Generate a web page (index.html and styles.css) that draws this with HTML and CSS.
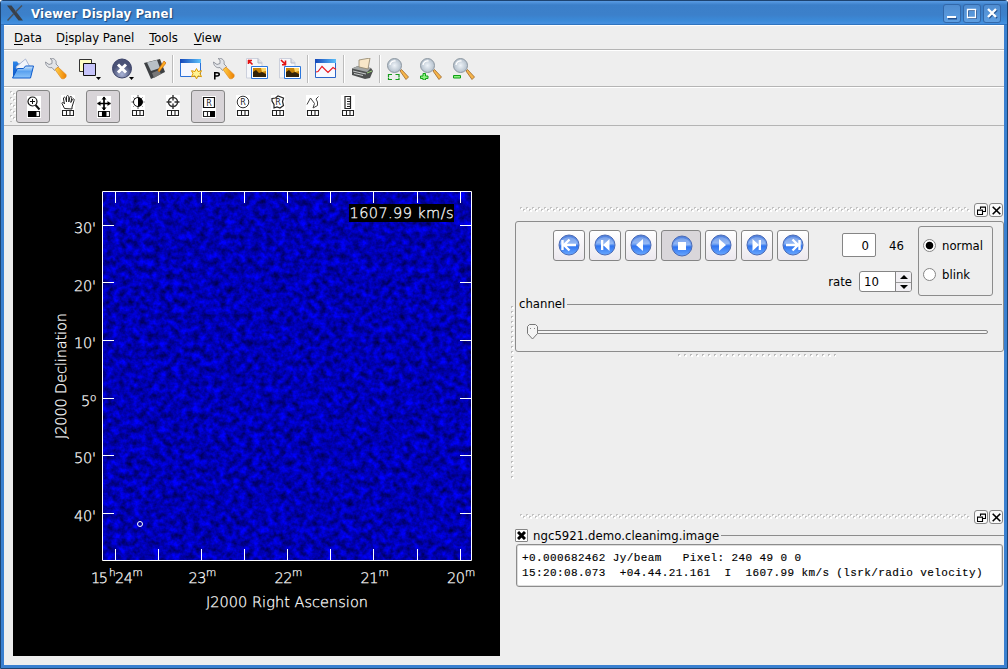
FILE: index.html
```html
<!DOCTYPE html>
<html lang="en">
<head>
<meta charset="utf-8">
<title>Viewer Display Panel</title>
<link rel="stylesheet" href="styles.css">
</head>
<body>
<svg class="defs" width="0" height="0">
  <defs>
    <pattern id="dots" width="6" height="6" patternUnits="userSpaceOnUse"><path d="M1 1h2v2H1zM4 3h2v2H4z" fill="#fff"/><path d="M0 0h2v1H1v1H0zM3 2h2v1H4v1H3z" fill="#c2c2c2"/></pattern>
    <pattern id="dotsH" width="6" height="5" patternUnits="userSpaceOnUse"><path d="M1 1h2v2H1z" fill="#fff"/><path d="M0 0h2v1H1v1H0z" fill="#bbb"/></pattern>
    <pattern id="dotsV" width="5" height="5" patternUnits="userSpaceOnUse"><path d="M1 1h2v2H1z" fill="#fff"/><path d="M0 0h2v1H1v1H0z" fill="#bbb"/></pattern>
    <linearGradient id="ball" x2="0" y2="1"><stop stop-color="#4a7cdc"/><stop offset=".45" stop-color="#79a8f4"/><stop offset=".55" stop-color="#2f74f0"/><stop offset="1" stop-color="#6aa8ff"/></linearGradient>
    <linearGradient id="folder" x2="0" y2="1"><stop stop-color="#2f86e8"/><stop offset="1" stop-color="#0b52c4"/></linearGradient>
    <linearGradient id="flap" x2="0" y2="1"><stop stop-color="#d6eafc"/><stop offset=".45" stop-color="#5aa2f0"/><stop offset="1" stop-color="#8cc4fa"/></linearGradient>
    <linearGradient id="winbar" x2="1" y2="0"><stop stop-color="#1446b8"/><stop offset="1" stop-color="#5cc0fa"/></linearGradient>
    <linearGradient id="orange" x2="1" y2="0"><stop stop-color="#ffd24a"/><stop offset="1" stop-color="#ee7f00"/></linearGradient>
    <radialGradient id="glass"><stop stop-color="#eef3f8"/><stop offset="1" stop-color="#b4c0cc"/></radialGradient>
    <radialGradient id="stopball" cy=".8"><stop stop-color="#aab4d8"/><stop offset="1" stop-color="#4a5276"/></radialGradient>
    <symbol id="wrench" viewBox="0 0 22 22"><path d="M.5 4 4 6.500 7 5.500V2L5 .5C9-.5 12 2.500 11 6l2.500 2.500-4 4L7 9.500C4 10.500.5 8 .5 4z" fill="#e2e4e8" stroke="#92969e"/><path d="M10 11.500l3-2.500 8 7.500c1 3-2 5-4.500 4z" fill="url(#orange)" stroke="#e08a20" stroke-width=".7"/></symbol>
    <symbol id="lens" viewBox="0 0 22 22"><path d="M13 13l1.500-1.500 7 7.500-2.500 2.500z" fill="#f7b54a" stroke="#9a6428" stroke-width=".8"/><circle cx="7.500" cy="7.500" r="7" fill="url(#glass)" stroke="#8e98a2"/><path d="M3 7c0-3 3-4.500 5.500-4" fill="none" stroke="#fff" stroke-width="1.300"/></symbol>
    <symbol id="page" viewBox="0 0 22 22"><path d="M.5.500H12l4 4V20H.5z" fill="#f6f7fa" stroke="#ccd0dc"/><path d="M12 .5V5h4" fill="#dfe2ea" stroke="#b4b8c4"/><path d="M5.500 8.500h16v12h-16z" fill="#fff" stroke="#2b76dc"/><path d="M7 10h13v9H7z" fill="#c88408"/><path d="M15 10h5v3l-4 1z" fill="#ffd768"/><path d="M7 14l3-2 3 3 3-1 4 2v3H7z" fill="#33240a"/></symbol>
    <symbol id="keys" viewBox="0 0 14 7"><path d="M1.500.5h11v5h-11zM5.500 1v5M9 1v5" fill="#fff" stroke="#222" stroke-width="1.100"/></symbol>
    <symbol id="ballbg" viewBox="0 0 22 22"><circle cx="11" cy="11" r="10" fill="url(#ball)" stroke="#4b6bb6"/><path d="M2.500 9.500C4 1 18 1 19.500 9.500 14 12 8 8.500 2.500 9.500z" fill="#fff" opacity=".22"/></symbol>
    <symbol id="float" viewBox="0 0 9 9"><path d="M3.500 3V1h5v4.500H6M3 1.200h6" fill="none" stroke="#000" stroke-width="1.100"/><path d="M.5 4h5v4.500h-5zM0 4.200h6" fill="none" stroke="#000" stroke-width="1.100"/></symbol>
    <symbol id="close" viewBox="0 0 9 9"><path d="M.7.7l7.600 7.600M8.300.7L.7 8.300" stroke="#000" stroke-width="1.600"/></symbol>
    <filter id="noise" x="0" y="0" width="1" height="1" color-interpolation-filters="sRGB"><feTurbulence type="fractalNoise" baseFrequency=".15" numOctaves="3" seed="7"/><feColorMatrix values="0 0 0 0 0  0 0 0 0 0  1 0 0 0 .2  0 0 0 0 1"/></filter>
  </defs>
</svg>
<div class="window">
  <header class="titlebar">
    <svg class="xlogo" width="16" height="16"><path d="M0 .5h4.500L16 15.500h-4.500z" fill="#394049"/><path d="M15 .5 8.500 7M6.500 9 .5 15.500" stroke="#4a525c" stroke-width="1.500"/></svg>
    <h1 class="title">Viewer Display Panel</h1>
    <div class="winbtns">
      <span class="winbtn"><svg width="18" height="18"><path d="M5 14.500h9" stroke="#245290" stroke-width="2"/><path d="M4 13h9" stroke="#fff" stroke-width="2"/></svg></span>
      <span class="winbtn"><svg width="18" height="18"><path d="M5.500 6.500h8v8h-8z" fill="none" stroke="#245290"/><path d="M4.500 5.500h8v8h-8zM4 5.500h9" fill="none" stroke="#fff" stroke-width="1.300"/></svg></span>
      <span class="winbtn"><svg width="18" height="18"><path d="M6 6l8 8M14 6l-8 8" stroke="#245290" stroke-width="2"/><path d="M5 5l8 8M13 5l-8 8" stroke="#fff" stroke-width="2.400"/></svg></span>
    </div>
  </header>
  <nav class="menubar"><span class="menu"><u>D</u>ata</span><span class="menu wide">D<u>i</u>splay Panel</span><span class="menu"><u>T</u>ools</span><span class="menu view"><u>V</u>iew</span></nav>
  <div class="toolbar">
    <span class="tool"><svg width="22" height="22"><path d="M1 3.500h4l1.500 2H11v14H1z" fill="url(#folder)"/><path d="M4 9l9.500-8 5 9-9 8z" fill="#f2f5fc" stroke="#aab6d2"/><path d="M.5 20 5.500 10.500h6l2-2.500h8l-3 12z" fill="url(#flap)" stroke="#0d5bcc"/></svg></span>
    <span class="tool"><svg width="22" height="22"><use href="#wrench"/></svg></span>
    <span class="tool shift"><svg width="22" height="22"><path d="M.5 1.500h12v12H.5z" fill="#ffffc4" stroke="#333"/><path d="M4.500 5.500h12v12h-12z" fill="#c6c4fa" stroke="#111"/><path d="M17 19h5l-2.500 3z"/></svg></span>
    <span class="tool shift"><svg width="22" height="22"><circle cx="10" cy="10.500" r="9.500" fill="url(#stopball)" stroke="#3b4268"/><path d="M6 6.500l8 8M14 6.500l-8 8" stroke="#fff" stroke-width="3"/><path d="M17 19h5l-2.500 3z"/></svg></span>
    <span class="tool"><svg width="22" height="22"><path d="M0 5 16 1l5 13-14 7z" fill="#3d4043"/><path d="M3 4.500 13 2l3 8-9 3z" fill="#b8c0c6"/><path d="M8 15l7-3 2 4-7 4z" fill="#777"/><path d="M20 3l2 2-7 9-1-2z" fill="#ffad22" stroke="#c96908" stroke-width=".7"/></svg></span>
    <span class="sep"></span>
    <span class="tool"><svg width="22" height="22"><path d="M.5 1.500h20v17H.5z" fill="#f5f7ff" stroke="#2a70d8"/><path d="M0 1h21v4H0z" fill="url(#winbar)"/><path d="M16.500 10.500l1.500 3 3.500-.8-1.500 3 1.500 3-3.500-.8-1.500 3-1.500-3-3.500.8 1.500-3-1.500-3 3.500.8z" fill="#fff394" stroke="#e09a00"/></svg></span>
    <span class="tool"><svg width="22" height="22"><use href="#wrench"/><path d="M1.800 21.500v-6.800H4c3 0 3 3.300 0 3.300H2" fill="none" stroke="#000" stroke-width="1.600"/></svg></span>
    <span class="tool"><svg width="22" height="22"><use href="#page"/><path d="M2 2.500h4M2.500 2v4M2 2l4.500 4.500" stroke="#e21212" stroke-width="1.600"/></svg></span>
    <span class="tool"><svg width="22" height="22"><use href="#page"/><path d="M6.500 2.500v4.500M3 6.700h4M2 2l4.500 4.500" stroke="#e21212" stroke-width="1.600"/></svg></span>
    <span class="sep"></span>
    <span class="tool"><svg width="22" height="22"><path d="M.5 1.500h20v18H.5z" fill="#f7f9ff" stroke="#2a64c8"/><path d="M0 1h21v4H0z" fill="url(#winbar)"/><path d="M1 14l2-.5 4-5 6 6 5-5 3 2" fill="none" stroke="#ea1c24" stroke-width="1.200"/></svg></span>
    <span class="sep"></span>
    <span class="tool"><svg width="22" height="22"><path d="M1 10.500 7 8l13 2 2 3-3 7-5 1L1 17z" fill="#4e5050"/><path d="M1 10.500 7 8l13 2-4 4z" fill="#a3a7a6"/><path d="M8 2l11-2-2 11-9-2z" fill="#f8e7c8" stroke="#8f8369" stroke-width=".8"/><path d="M2 13l13 3M3 15.500l9 2" stroke="#c9cccc"/><path d="M16 15l5-2" stroke="#9ad17a"/></svg></span>
    <span class="sep"></span>
    <span class="tool"><svg width="22" height="22"><use href="#lens"/><path d="M1.500 19v-2.500H5M8.500 16.500H12V19M1.500 19.500v2H5M8.500 21.500H12v-2" fill="none" stroke="#159d1c" stroke-width="1.200"/></svg></span>
    <span class="tool"><svg width="22" height="22"><use href="#lens"/><path d="M3 15.500h2.500V18H8v2.500H5.500V22H3v-1.500H.5V18H3z" fill="#8cf080" stroke="#11a016"/></svg></span>
    <span class="tool"><svg width="22" height="22"><use href="#lens"/><path d="M.5 17.500h7v2.500h-7z" fill="#8cf080" stroke="#11a016"/></svg></span>
  </div>
  <div class="toolbar mouse">
    <svg class="handle" width="6" height="31"><rect width="6" height="31" fill="url(#dots)"/></svg>
    <span class="mtool on"><svg width="14" height="22"><rect width="14" height="22" fill="#fff"/><circle cx="5.500" cy="5.500" r="4.500" fill="none" stroke="#111" stroke-width="1.200"/><path d="M3 5.500h5M5.500 3v5" stroke="#111"/><path d="M8.500 9l4 4.500" stroke="#111" stroke-width="2"/><use href="#keys" y="15" width="14" height="7"/><path d="M1 15h8v6H1z"/></svg></span>
    <span class="mtool"><svg width="14" height="22"><rect width="14" height="22" fill="#fff"/><path d="M3.500 13.500 1 8.500c0-2 2-1 2.500.5L2.500 4C2 2 4.200 1.500 4.700 3.500L5.500 7V2c0-2 2.200-2 2.300 0V7l1-4.500c.5-2 2.400-1 2 .5l-1 4.500 1.700-3c1-1.500 2.300-.3 1.500 1.200L11 12v2z" fill="#fff" stroke="#222"/><use href="#keys" y="15" width="14" height="7"/></svg></span>
    <span class="mtool on"><svg width="14" height="22"><rect width="14" height="22" fill="#fff"/><path d="M7 1v13M.5 7.500h13" stroke="#000" stroke-width="1.700"/><path d="M4.500 3.500 7 .5l2.500 3zM4.500 11.500 7 14.500l2.500-3zM3.500 5 .3 7.500l3.200 2.500zM10.500 5l3.200 2.500-3.200 2.500z"/><use href="#keys" y="15" width="14" height="7"/><path d="M5 15h4v6H5z"/></svg></span>
    <span class="mtool"><svg width="14" height="22"><rect width="14" height="22" fill="#fff"/><path d="M7 0v14M.5 7h13M2.500 2.500l9 9M11.500 2.500l-9 9" stroke="#444" stroke-dasharray="2 1"/><circle cx="7" cy="7" r="4.500" fill="#fff" stroke="#111"/><path d="M7 2.500a4.500 4.500 0 0 1 0 9z"/><use href="#keys" y="15" width="14" height="7"/></svg></span>
    <span class="mtool"><svg width="14" height="22"><rect width="14" height="22" fill="#fff"/><circle cx="7" cy="7" r="4.500" fill="none" stroke="#333" stroke-width="1.500"/><path d="M7 0v5.500M7 8.500v5.500M.5 7h5M8.500 7h5" stroke="#333" stroke-width="1.400"/><use href="#keys" y="15" width="14" height="7"/></svg></span>
    <span class="mtool on"><svg width="14" height="22"><rect width="14" height="22" fill="#fff"/><path d="M1.500 1.500h11v10h-11z" fill="none" stroke="#111" stroke-width="1.200"/><text class="rg" x="7" y="9.600">R</text><use href="#keys" y="15" width="14" height="7"/><path d="M8 15h5v6H8z"/></svg></span>
    <span class="mtool"><svg width="14" height="22"><rect width="14" height="22" fill="#fff"/><circle cx="7" cy="7" r="5.800" fill="none" stroke="#333"/><text class="rg" x="7" y="10">R</text><use href="#keys" y="15" width="14" height="7"/></svg></span>
    <span class="mtool"><svg width="14" height="22"><rect width="14" height="22" fill="#fff"/><path d="M1 3.500 4.500 3 7 1l5.500 2-1 3.500 1 4L9 13l-3-1-3 1V9.500L1 6z" fill="none" stroke="#222" stroke-width="1.200"/><text class="rg" x="7" y="10">R</text><use href="#keys" y="15" width="14" height="7"/></svg></span>
    <span class="mtool"><svg width="14" height="22"><rect width="14" height="22" fill="#fff"/><path d="M1 9.500 4.500 3l4 5.500-1.500 4.500 4.500-2.500V7L10 4l2.500-2.500" fill="none" stroke="#444"/><use href="#keys" y="15" width="14" height="7"/></svg></span>
    <span class="mtool"><svg width="14" height="22"><rect width="14" height="22" fill="#fff"/><path d="M4 1.500h5.500v12H4zM6 4h3M6 6.500h3M6 9h3M6 11.500h3" fill="none" stroke="#222" stroke-width="1.200"/><use href="#keys" y="15" width="14" height="7"/></svg></span>
  </div>
  <main class="main">
    <svg class="plot" width="487" height="521" viewBox="13 135 487 521">
      <rect x="13" y="135" width="487" height="521"/>
      <rect x="103" y="192" width="368" height="368" filter="url(#noise)"/>
      <path class="axis" d="M102.500 191.500h369v369h-369z
        M115.500 192v11m43-11v11m43-11v11m43-11v11m43-11v11m43-11v11m43-11v11m44-11v11m43-11v11
        M115.500 560v-11m43 11v-11m43 11v-11m43 11v-11m43 11v-11m43 11v-11m43 11v-11m44 11v-11m43 11v-11
        M103 225.500h11M103 282.500h11M103 340.500h11M103 398.500h11M103 455.500h11M103 513.500h11
        M471 225.500h-11M471 282.500h-11M471 340.500h-11M471 398.500h-11M471 455.500h-11M471 513.500h-11"/>
      <circle class="axis" cx="140" cy="524" r="2.500"/>
      <rect x="349" y="204" width="105" height="18"/>
      <g class="lab">
        <text x="349.500" y="218" textLength="104">1607.99 km/s</text>
        <text x="74" y="233" textLength="22">30'</text><text x="74" y="291" textLength="22">20'</text><text x="74" y="348" textLength="22">10'</text>
        <text x="81" y="406">5</text><text class="sup" x="90" y="401">o</text>
        <text x="74" y="463" textLength="22">50'</text><text x="74" y="521" textLength="22">40'</text>
        <text x="91" y="583" textLength="17">15</text><text class="sup" x="109" y="576">h</text><text x="115" y="583" textLength="18">24</text><text class="sup" x="132.500" y="576">m</text>
        <text x="188.500" y="583" textLength="18">23</text><text class="sup" x="206" y="576">m</text>
        <text x="274.500" y="583" textLength="18">22</text><text class="sup" x="292" y="576">m</text>
        <text x="360.500" y="583" textLength="18">21</text><text class="sup" x="378.500" y="576">m</text>
        <text x="447" y="583" textLength="18">20</text><text class="sup" x="465" y="576">m</text>
        <text x="206" y="607" textLength="162">J2000 Right Ascension</text>
        <text transform="translate(66 439) rotate(-90)" textLength="126">J2000 Declination</text>
      </g>
    </svg>
    <svg class="vsplit" width="4" height="173"><rect width="4" height="173" fill="url(#dotsV)"/></svg>
    <div class="docks">
      <section class="dock">
        <div class="dockbar"><svg class="dockgrip" width="450" height="6"><rect width="450" height="6" fill="url(#dots)"/></svg><span class="dbtn"><svg width="9" height="9"><use href="#float"/></svg></span><span class="dbtn"><svg width="9" height="9"><use href="#close"/></svg></span></div>
        <div class="animator">
          <div class="controls">
            <div class="left">
              <div class="row1">
                <span class="play"><svg width="22" height="22"><use href="#ballbg"/><path d="M18 11H7M11.500 5.500 6 11l5.500 5.500M4.500 6v10" fill="none" stroke="#fff" stroke-width="2.400"/></svg></span>
                <span class="play"><svg width="22" height="22"><use href="#ballbg"/><path d="M7 6h2.300v10H7zM15.500 5v12L9 11z" fill="#fff"/></svg></span>
                <span class="play"><svg width="22" height="22"><use href="#ballbg"/><path d="M13 5v12l-7-6z" fill="#fff"/></svg></span>
                <span class="play stop"><svg width="22" height="22"><use href="#ballbg"/><path d="M7 7h8v8H7z" fill="#fff"/></svg></span>
                <span class="play"><svg width="22" height="22"><use href="#ballbg"/><path d="M9 5v12l7-6z" fill="#fff"/></svg></span>
                <span class="play"><svg width="22" height="22"><use href="#ballbg"/><path d="M15 6h-2.300v10H15zM6.500 5v12l6.500-6z" fill="#fff"/></svg></span>
                <span class="play"><svg width="22" height="22"><use href="#ballbg"/><path d="M4 11h11M10.500 5.500 16 11l-5.500 5.500M17.500 6v10" fill="none" stroke="#fff" stroke-width="2.400"/></svg></span>
                <span class="frame-no">0</span><span class="total">46</span>
              </div>
              <div class="row2"><span>rate</span><div class="spin"><span class="val">10</span><span class="arrows"><i><svg width="8" height="4"><path d="M0 4l4-4 4 4z"/></svg></i><i><svg width="8" height="4"><path d="M0 0h8L4 4z"/></svg></i></span></div></div>
            </div>
            <div class="modes"><label class="mode"><span class="radio sel"></span><span class="cap">normal</span></label><label class="mode"><span class="radio"></span><span class="cap">blink</span></label></div>
          </div>
          <div class="legend"><span>channel</span><span class="rule"></span></div>
          <svg class="slider" width="462" height="17"><rect x="6.500" y="6.500" width="454" height="3" rx="1.500" fill="#f5f5f5" stroke="#858585"/><path d="M2.500.5h6l2 2v7L5.500 15l-5-5.500v-7z" fill="#f4f4f4" stroke="#777"/><path d="M3 4.500h1M7 4.500h1" stroke="#888"/></svg>
        </div>
        <svg class="hsplit" width="158" height="4"><rect width="158" height="4" fill="url(#dotsH)"/></svg>
      </section>
      <section class="dock tracking">
        <div class="dockbar"><svg class="dockgrip" width="450" height="6"><rect width="450" height="6" fill="url(#dots)"/></svg><span class="dbtn"><svg width="9" height="9"><use href="#float"/></svg></span><span class="dbtn"><svg width="9" height="9"><use href="#close"/></svg></span></div>
        <div class="image-name"><span class="check"><svg width="9" height="9"><path d="M1 1l7 7M8 1L1 8" stroke="#000" stroke-width="3"/></svg></span><span class="name">ngc5921.demo.cleanimg.image</span><span class="rule"></span></div>
        <pre class="readout">+0.000682462 Jy/beam   Pixel: 240 49 0 0
15:20:08.073  +04.44.21.161  I  1607.99 km/s (lsrk/radio velocity)</pre>
      </section>
    </div>
  </main>
</div>
</body>
</html>
```
FILE: styles.css
```css
* { box-sizing: border-box; }
body { margin: 0; font: 13px/16px "DejaVu Sans Condensed", "DejaVu Sans", sans-serif; font-stretch: condensed; color: #000; }
svg { display: block; flex: none; }
.defs { position: absolute; }
.window { width: 1008px; height: 669px; display: flex; flex-direction: column; background: #3a80d0; border: 1px solid #1d4370; padding: 0 3px 3px; border-radius: 3px 3px 0 0; }
.titlebar { height: 24px; margin: 0 -3px; padding: 2px 6px 0 6px; display: flex; align-items: center; background: linear-gradient(#5a9ce4, #3b7fc9 4px, #3c80ca 60%, #3b8ad8 85%, #4690e0); border-bottom: 1px solid #2f74bf; }
.xlogo { margin: -2px 0 0 0; }
.title { margin: 0 0 0 8px; font-size: 13px; line-height: 16px; letter-spacing: .2px; font-weight: bold; color: #fff; text-shadow: 1px 1px 1px #1c4478; flex: 1; }
.winbtns { display: flex; gap: 2px; }
.winbtn { width: 18px; height: 19px; border-radius: 3px; background: linear-gradient(#4f8cd0, #5e9fe2); box-shadow: 0 0 0 1px #3268aa inset; }
.menubar { height: 25px; background: #eee; border-top: 1px solid #fff; border-bottom: 1px solid #b4b4b4; display: flex; gap: 15px; padding: 4px 10px 0; }
.menu u { text-decoration-thickness: 1px; text-underline-offset: 2px; }
.wide { margin-left: -1px; }
.view { margin-left: 1px; }
.toolbar { height: 37px; background: #eee; border-top: 1px solid #fff; border-bottom: 1px solid #b4b4b4; display: flex; align-items: center; padding-left: 2px; }
.tool { width: 33px; height: 30px; display: flex; align-items: center; justify-content: center; }
.shift { padding-left: 3px; }
.sep { width: 3px; height: 28px; background: linear-gradient(90deg, #eee 1px, #bcbcbc 1px 2px, #fff 2px); }
.mouse { height: 39px; gap: 1px; padding-left: 6px; align-items: flex-start; }
.handle { margin-top: 3px; margin-right: -1px; }
.mtool { width: 34px; height: 33px; margin-top: 2px; padding: 4px 0 0; display: flex; justify-content: center; align-items: flex-start; border: 1px solid transparent; border-radius: 3px; }
.mtool.on { padding: 5px 0 0 2px; background: #d8d4d8; border-color: #858585; }
.rg { font: 8px "DejaVu Sans", sans-serif; text-anchor: middle; fill: #222; }
.main { flex: 1; background: #eee; display: flex; align-items: flex-start; padding: 9px 0 0 9px; min-height: 0; }
.plot { text-rendering: geometricPrecision; }
.axis { fill: none; stroke: #fff; }
.lab { fill: #fff; stroke: #fff; stroke-width: .25px; font: 200 14.5px "DejaVu Sans", sans-serif; }
.lab .sup { font-size: 10.5px; }
.vsplit { margin: 171px 0 0 11px; }
.docks { width: 489px; flex: none; padding-top: 68px; }
.dockbar { height: 14px; display: flex; align-items: center; gap: 1px; padding-left: 5px; }
.dockgrip { margin-right: 3px; }
.dbtn { width: 14px; height: 14px; border: 1px solid #888; border-radius: 3px; background: #fafafa; display: flex; align-items: center; justify-content: center; }
.animator { height: 131px; margin-top: 4px; border: 1px solid #8c8c8c; border-radius: 3px; padding-top: 4px; }
.controls { display: flex; height: 70px; padding-left: 37px; }
.left { width: 359px; margin-right: 6px; }
.row1 { display: flex; gap: 4px; padding-top: 4px; }
.play { width: 32px; height: 31px; padding-bottom: 1px; border: 1px solid #858585; border-radius: 3px; background: linear-gradient(#fff, #ece8ee); display: flex; align-items: center; justify-content: center; }
.stop { width: 40px; background: #d9d6da; padding: 1px 0 0 2px; }
.frame-no { width: 34px; height: 24px; margin: 3px 0 0 29px; border: 1px solid #858585; border-radius: 2px; background: #fff; text-align: right; padding: 4px 6px 0; }
.total { margin: 8px 0 0 9px; }
.row2 { display: flex; justify-content: flex-end; gap: 7px; margin-top: 10px; line-height: 21px; }
.spin { width: 53px; height: 21px; border: 1px solid #858585; border-radius: 3px; background: #fff; display: flex; overflow: hidden; line-height: 20px; }
.val { width: 35px; padding-left: 4px; }
.arrows { flex: 1; border-left: 1px solid #858585; }
.arrows i { height: 9.5px; display: flex; align-items: center; justify-content: center; background: #f1eff3; }
.arrows i + i { border-top: 1px solid #999; height: 10px; }
.modes { width: 75px; height: 70px; border: 1px solid #8c8c8c; border-radius: 3px; padding: 10px 0 0 4px; display: flex; flex-direction: column; gap: 12px; }
.mode { display: flex; align-items: center; gap: 6px; height: 17px; }
.cap { padding-top: 1px; }
.radio { width: 13px; height: 13px; border: 1px solid #858585; border-radius: 50%; background: #fff; }
.sel { background: radial-gradient(circle, #000 3.400px, #fff 4.200px); }
.legend, .image-name { display: flex; align-items: center; }
.legend { padding-left: 3px; gap: 2px; height: 16px; }
.rule { flex: 1; height: 1px; background: #8c8c8c; }
.legend .rule { margin: 0 1px 0 0; }
.slider { margin: 12px 0 0 11px; }
.hsplit { margin: 2px 0 0 163px; }
.tracking { padding-top: 152px; }
.image-name { height: 16px; margin-top: 4px; }
.image-name .rule { margin-top: -1px; }
.check { width: 13px; height: 13px; border: 1px solid #858585; border-radius: 1px; background: #fff; display: flex; align-items: center; justify-content: center; margin: -1px 5px 0 0; }
.name { margin-right: 2px; letter-spacing: .04px; }
.readout { margin: 0 1px; height: 43px; border: 1px solid #8c8c8c; border-radius: 3px; background: #fff; padding: 6px 5px 0; font: 11px/15px "Liberation Mono", monospace; letter-spacing: .385px; box-shadow: inset 0 0 0 1px #ddd; -webkit-text-stroke: .15px #000; }
```
